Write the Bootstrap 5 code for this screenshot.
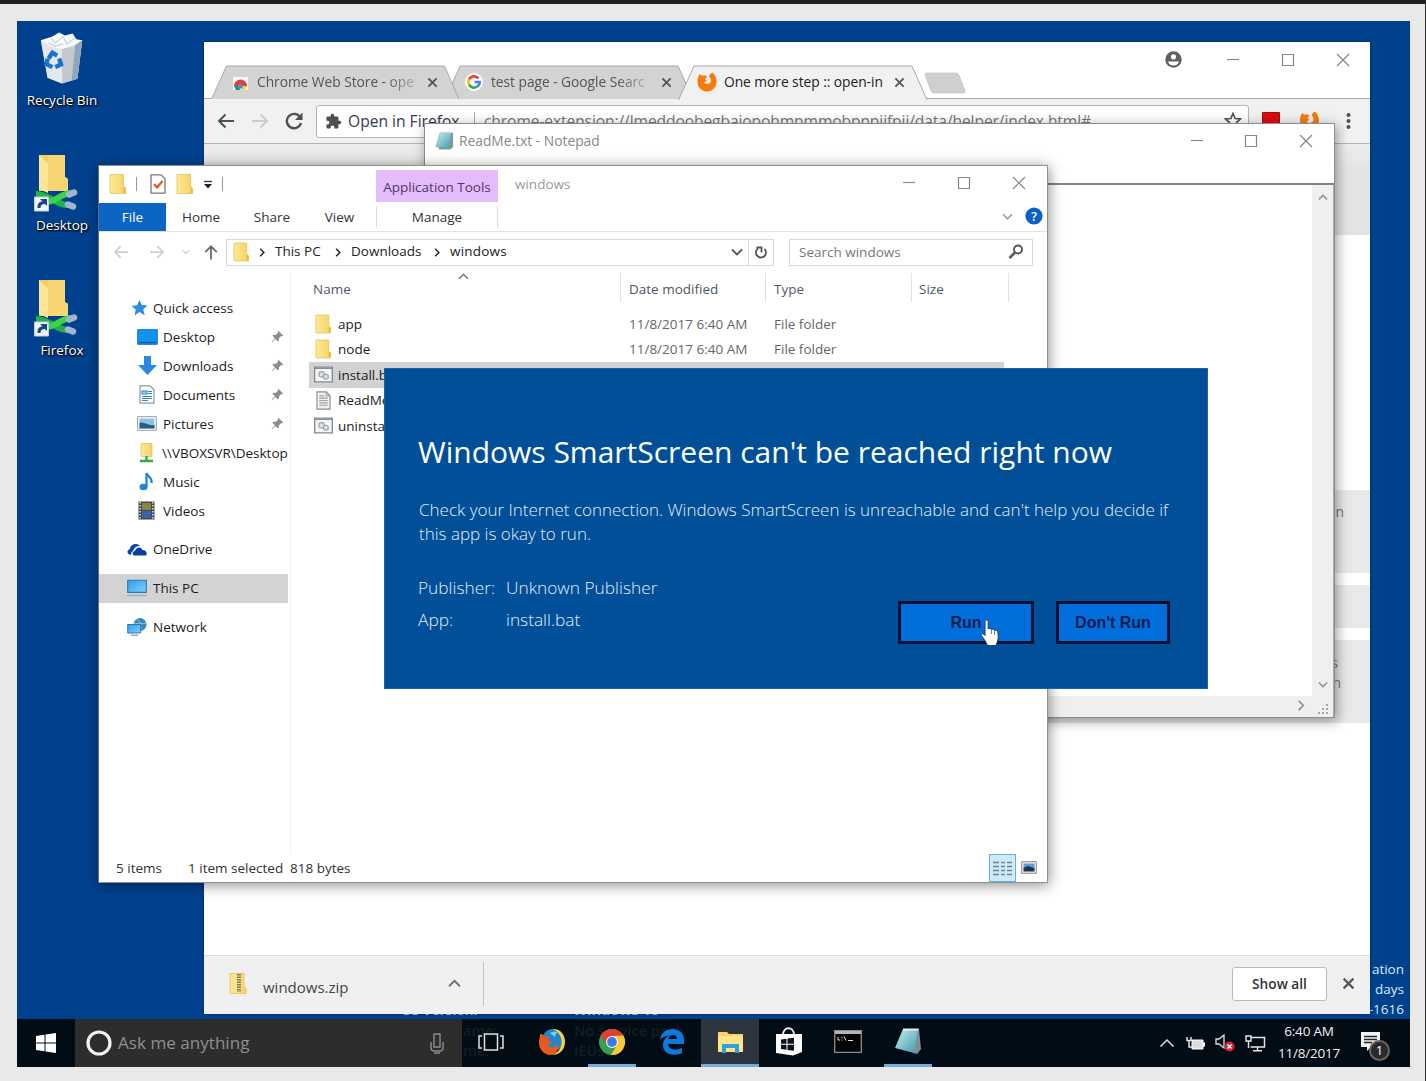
<!DOCTYPE html>
<html lang="en">
<head>
<meta charset="utf-8">
<title>Desktop</title>
<link rel="stylesheet" href="https://cdn.jsdelivr.net/npm/bootstrap@5.3.0/dist/css/bootstrap.min.css">
<script src="https://cdn.jsdelivr.net/npm/bootstrap@5.3.0/dist/js/bootstrap.bundle.min.js"></script>
<style>
body{margin:0;width:1426px;height:1081px;overflow:hidden;background:#e9e9e9;border-top:4px solid #201e20;border-right:1px solid #333;font-family:"Open Sans","Noto Sans",sans-serif;font-size:13.5px;line-height:18px;color:#1c1c1c;white-space:nowrap}
svg{display:block;flex:none}
.screen{margin:17px 0 0 17px;width:1393px;height:1046px;background:#00418e;overflow:hidden}
.desk{height:998px;overflow:hidden}
.win{position:absolute;background:#fff}
.dicon{position:absolute;width:92px;color:#fff;text-shadow:1px 1px 2px #000,0 1px 2px #000;text-align:center}
.dicon svg{margin:0 auto 4px}
.wm{position:absolute;color:#dce8f5}
/* browser */
.browser{left:187px;top:21px;width:1166px;height:972px;box-shadow:0 0 2px #001c40}
.tabstrip{height:57px;border-bottom:1px solid #a9a9a9}
.tabx{position:absolute;top:23px;height:34px;font-size:13.8px;letter-spacing:-.05px;color:#555}
.tabx>.shape{position:absolute;inset:0}
.tabx>.inner{position:relative;height:34px}
.fade-end{-webkit-mask-image:linear-gradient(90deg,#000 82%,rgba(0,0,0,.3))}
.tools{height:45px;background:#f1f1f1;border-bottom:1px solid #b5b5b5}
.omni{width:933px;height:33px;border:1px solid #b4b4b4;border-radius:3px;background:#fff;font-size:15.6px}
.banner-bg{height:91px;background:linear-gradient(#ededed,#e4e4e4 30%)}
.greybox{background:#e9e9e9;color:#777;text-align:right;font-size:14px}
.dlbar{height:59px;background:#f0f0f0;border-top:1px solid #ddd;padding-bottom:3px}
.showall{width:95px;height:34px;border:1px solid #b8b8b8;border-radius:3px;background:#fff;font-weight:600;font-size:13.7px;color:#333}
/* notepad */
.notepad{left:407px;top:102px;width:911px;height:595px;border:1px solid #8c8c8c;box-shadow:2px 3px 12px rgba(0,0,0,.4)}
.np-edge{border-top:2px solid #828282;border-right:1px solid #aaa}
.sb{background:#efefef}
/* explorer */
.explorer{left:81px;top:144px;width:950px;height:718px;border:1px solid #8f8f8f;border-left-color:#5b6f8c;box-shadow:1px 2px 13px rgba(0,0,0,.45)}
.ctx-tab{width:122px;background:#e4bcfb;color:#4f3768}
.file-tab{width:67px;height:28px;background:#0b66c3;color:#fff}
.ribbon{height:30px;border-bottom:1px solid #e2e2e2;color:#333}
.boxed{border:1px solid #d9d9d9;height:27px}
.side{width:189px}
.side .it{height:29px}
.side .sel{background:#d3d3d3}
.pin{margin-left:auto;margin-right:4px}
.colhead{height:30px;color:#505666}
.colhead>div{border-right:1px solid #e2e2e2;height:29px;padding-top:3px}
.frow{height:25.5px;color:#666}
.frow .nm{color:#1c1c1c}
.frow.sel{background:#d2d2d2}
.cn{width:311px}.cd{width:145px}.ct{width:146px}.cs{width:97px}
/* dialog */
.smart{left:367px;top:347px;width:824px;height:321px;background:#004f98;color:#e4eef8;border:1px solid #1c62a6;padding:62px 0 0 33px;font-size:17px;line-height:24px;font-weight:300}
.smart h1{font-size:30px;line-height:41px;font-weight:400;margin:0;color:#fff}
.sbtn{height:43px;border:3px solid #001133;border-radius:0;background:#006fdc;color:#001a4d;font:700 16px/20px "Liberation Sans",sans-serif;padding:0}
.cursor{position:absolute;left:963px;top:598px}
/* taskbar */
.taskbar{height:48px;background:#010c15;color:#f0f0f0}
.search-tb{width:387px;background:#2d2d2d;color:#8f8f8f;font-size:17.1px}
.tb{width:58px;height:48px;border-bottom:3px solid transparent}
.tb.on{position:relative}
.tb.on::after{content:"";position:absolute;left:5px;right:5px;bottom:-3px;height:3px;background:#76a9df}
.tb.act{background:#2f353f;border-color:#76a9df}
.ghost{position:absolute;color:#131d22;font-weight:600;z-index:0;font-size:14.5px}
.taskbar svg{position:relative;z-index:1}
.badge1{position:absolute;left:1352px;top:1019px;width:21px;height:21px;border-radius:50%;background:#2a2a2a;border:2px solid #666;color:#fff;font-size:13px;line-height:17px;text-align:center;z-index:2}
</style>
</head>
<body>
<svg width="0" height="0" class="position-absolute">
<defs>
<linearGradient id="gf" x1="0" x2="1"><stop offset="0" stop-color="#ffe994"/><stop offset="1" stop-color="#f6d264"/></linearGradient>
<linearGradient id="gs" x1="0" y1="0" x2="1" y2="1"><stop offset="0" stop-color="#2f9fe8"/><stop offset="1" stop-color="#7fd0ff"/></linearGradient>
<linearGradient id="gn" x1="0" y1="0" x2="1" y2="1"><stop offset="0" stop-color="#c8eef2"/><stop offset="1" stop-color="#3e9aa6"/></linearGradient>
<symbol id="folder" viewBox="0 0 18 20"><path d="M1 .5h13.500v12l2 1.500v5.500H1z" fill="url(#gf)" stroke="#e3c25c" stroke-width=".8"/><path d="M14.500 13v6h2v-5z" fill="#e8b93c"/></symbol>
<symbol id="min" viewBox="0 0 14 14"><path d="M1 6.500h12" stroke="#8a8a8a" stroke-width="1.200"/></symbol>
<symbol id="max" viewBox="0 0 14 14"><path d="M1.500 1.500h11v11h-11z" fill="none" stroke="#858585" stroke-width="1.200"/></symbol>
<symbol id="cls" viewBox="0 0 14 14"><path d="M1 1l12 12M13 1L1 13" stroke="#858585" stroke-width="1.200"/></symbol>
<symbol id="tx" viewBox="0 0 12 12"><path d="M1.500 1.500l9 9M10.500 1.500l-9 9" stroke="#555" stroke-width="2"/></symbol>
<symbol id="chev" viewBox="0 0 12 8"><path d="M1 1.500l5 5 5-5" fill="none" stroke="currentColor" stroke-width="1.800"/></symbol>
<symbol id="chu" viewBox="0 0 12 8"><path d="M1 6.500l5-5 5 5" fill="none" stroke="currentColor" stroke-width="1.800"/></symbol>
<symbol id="chr" viewBox="0 0 8 12"><path d="M1.500 1l5 5-5 5" fill="none" stroke="currentColor" stroke-width="1.900"/></symbol>
<symbol id="arr" viewBox="0 0 18 16"><path d="M17 8H2M8.500 1.500L2 8l6.500 6.500" fill="none" stroke="currentColor" stroke-width="2"/></symbol>
<symbol id="pinn" viewBox="0 0 14 14"><path d="M8 .8l5.300 5.300-1.400.5-.8-.2-2.700 2.700.1 2.400-1 1-2.700-2.800L1 13.300l-.5-.5 3.700-3.900L1.500 6.100l1-1 2.500.2 2.600-2.600-.2-.8z" fill="#8d8d8d"/></symbol>
<symbol id="bat" viewBox="0 0 20 17"><path d="M.7.700h18.600v15.600H.7z" fill="#f4f4f4" stroke="#858a90" stroke-width="1.400"/><path d="M1 2h18" stroke="#858a90" stroke-width="1.300"/><circle cx="8" cy="8.300" r="2.900" fill="#dde2e6" stroke="#9ba3aa" stroke-width="1.200"/><circle cx="12.500" cy="10.800" r="2.600" fill="#dde2e6" stroke="#9ba3aa" stroke-width="1.200"/></symbol>
<symbol id="doc" viewBox="0 0 16 20"><path d="M1 .8h10l4 4v14.400H1z" fill="#f0f0f0" stroke="#8c8c8c" stroke-width="1.200"/><path d="M11 1v4h4M3.500 7.500h9M3.500 10h9M3.500 12.500h9M3.500 15h9M3.500 5h5" fill="none" stroke="#a0a0a0" stroke-width="1.200"/></symbol>
<symbol id="note" viewBox="0 0 20 20"><path d="M6 1.500h13v15l-3 2.500H4z" fill="#8a9396"/><path d="M5.500 1h12l-2 16.500L1 16z" fill="url(#gn)" stroke="#6aa0a8" stroke-width=".6"/><path d="M5.500 1.300h12.500" stroke="#dadada" stroke-width="1.800" stroke-dasharray="1.500 1"/></symbol>
<symbol id="fox" viewBox="0 0 20 20"><path d="M10 19.500a9.300 9.300 0 0 1-9.500-9.500c0-3 .7-5.500 2-8L5 3.800C7 3 9 3.500 10 4.500L8 7.500l2 1-3 2.300c2 2 6 1.200 6.800-1.300.6-2.500-.5-4-1.800-5.500C13 2 14.500.8 15.500.5 18.500 3 19.500 6.500 19.500 10a9.300 9.300 0 0 1-9.500 9.500z" fill="#f57c0b"/></symbol>
<symbol id="net" viewBox="0 0 46 58"><path d="M6 1h26v22l3 2v12H6z" fill="#f3cd62"/><path d="M6 1l9 8v30l-9-4z" fill="#ffe59a"/><path d="M15 9V1h17v22l3 2v12H15z" fill="#f7d572"/><path d="M3 40c14 0 20 12 34 11" fill="none" stroke="#22b14c" stroke-width="6"/><path d="M12 48c12 0 14-8 26-9" fill="none" stroke="#3fd34a" stroke-width="6"/><path d="M36 40.500l5-2M35 50.500l5 2" stroke="#9fb6cf" stroke-width="6.500" stroke-linecap="round"/><path d="M1.500 43h14v14h-14z" fill="#f2f6fb" stroke="#c6ccd5" stroke-width="1"/><path d="M4.500 54c0-5 2-6.500 5-6.500l-2.500-2.500h7v7l-2-2c-3 0-4.500 1-4.500 4z" fill="#16478e"/></symbol>
<symbol id="monitor" viewBox="0 0 20 18"><path d="M.7 1.200h18.600v12.200H.7z" fill="url(#gs)" stroke="#2e78b5" stroke-width="1.100"/><path d="M0 16.500h20" stroke="#9fb0bd" stroke-width="1.500"/></symbol>
</defs>
</svg>

<div class="screen position-relative">
<div class="desk">
  <div class="dicon" style="left:-1px;top:10px">
    <svg width="50" height="56" viewBox="0 0 52 57"><path d="M4 9h43l-5 40-16 5-15-6z" fill="#d5dadd"/><path d="M4 9l7 39 15 6V17z" fill="#e4e8ea"/><path d="M26 17l21-8-5 40-16 5z" fill="#c2c9ce"/><path d="M40 12l7-3-5 40-6 2z" fill="#8fa6bd"/><path d="M4 9l12-4 7-4 6 3 8-2 4 6 6 1-9 6-12 3-12-3z" fill="#f7f8f9"/><path d="M14 6l5 6 8-7 4 8 8-6M12 12l7 3 8-2" stroke="#b6bfc5" fill="none"/><g fill="none" stroke="#1674d1" stroke-width="4.500"><path d="M12 28l4-6 5 3"/><path d="M23 28l2 6-6 3"/><path d="M16 37l-6-3 1-6"/></g></svg>
    Recycle Bin</div>
  <div class="dicon" style="left:-1px;top:133px"><svg width="46" height="58" style="margin-left:17px"><use href="#net"/></svg>Desktop</div>
  <div class="dicon" style="left:-1px;top:258px"><svg width="46" height="58" style="margin-left:17px"><use href="#net"/></svg>Firefox</div>
  <div class="wm text-end" style="right:6px;top:938px;line-height:20px">ation<br>days<br>-1616</div>
  <div class="wm fw-bold" style="left:384px;top:980px">OS Version:</div>
  <div class="wm fw-bold" style="left:556px;top:980px;font-size:14.500px">Windows 10</div>

  <!-- Browser window -->
  <div class="win browser d-flex flex-column">
    <div class="tabstrip position-relative d-flex justify-content-end align-items-start flex-shrink-0">
      <div class="tabx" style="left:241px;width:248px"><svg class="shape" width="248" height="34"><path d="M.5 34L15 1h218l15 33" fill="#d3d3d3" stroke="#a9a9a9"/></svg>
        <div class="inner d-flex align-items-center"><svg style="margin-left:20px" width="18" height="18" viewBox="0 0 20 20"><circle cx="10" cy="10" r="10" fill="#fff"/><g fill="none" stroke-width="3"><path d="M15 6A6.300 6.300 0 0 0 4.500 7.200" stroke="#ea4335"/><path d="M4.500 7a6.300 6.300 0 0 0 0 6" stroke="#fbbc05"/><path d="M4.500 13A6.300 6.300 0 0 0 14.500 14.300" stroke="#34a853"/><path d="M14.300 14.600C16 13 16.400 11.500 16.300 10H10.500" stroke="#4285f4"/></g></svg>
        <span class="fade-end" style="margin-left:8px">test page - Google Searc</span><svg class="ms-auto" style="margin-right:21px" width="11" height="11"><use href="#tx"/></svg></div></div>
      <div class="tabx" style="left:7px;width:249px"><svg class="shape" width="249" height="34"><path d="M.5 34L15.500 1h218l14.500 33" fill="#d3d3d3" stroke="#a9a9a9"/></svg>
        <div class="inner d-flex align-items-center"><svg style="margin-left:21px" width="17" height="17" viewBox="0 0 17 17"><path d="M1 3h15v13H1z" fill="#f7f7f7"/><path d="M2 12a6.500 6.500 0 0 1 13 0H11a3 3 0 0 0-5 0z" fill="#db4437"/><path d="M2 12h4l2.500 4H4z" fill="#0f9d58"/><path d="M15 12h-4l-2 4h4z" fill="#ffcd40"/><circle cx="8.500" cy="12.500" r="2.300" fill="#4285f4"/></svg>
        <span class="fade-end" style="margin-left:8px">Chrome Web Store - ope</span><svg class="ms-auto" style="margin-right:22px" width="11" height="11"><use href="#tx"/></svg></div></div>
      <div class="tabx" style="left:474px;width:249px;height:35px;color:#222"><svg class="shape" width="249" height="35"><path d="M.5 35L16 1h218l15 34" fill="#f1f1f1" stroke="#a9a9a9"/></svg>
        <div class="inner d-flex align-items-center"><svg style="margin-left:19px" width="20" height="20"><use href="#fox"/></svg>
        <span style="margin-left:7px">One more step :: open-in</span><svg class="ms-auto" style="margin-right:22px" width="11" height="11"><use href="#tx"/></svg></div></div>
      <svg class="position-absolute" style="left:719px;top:30px" width="44" height="22"><path d="M2 3q0-2 2-2h29q2 0 3 2l6 16q0 2-2 2H11q-2 0-3-2z" fill="#cfcfcf" stroke="#c0c0c0" stroke-width=".7"/></svg>
      <div class="d-flex align-items-center" style="padding:9px 20px 0 0;height:26px">
        <svg width="17" height="17" viewBox="0 0 17 17"><circle cx="8.500" cy="8.500" r="8.200" fill="#606060"/><circle cx="8.500" cy="5.800" r="2.600" fill="#fff"/><path d="M3 10.500h11c-1 3-3 4-5.500 4s-4.500-1-5.500-4z" fill="#fff"/></svg>
        <svg style="margin-left:44px" width="14" height="14"><use href="#min"/></svg><svg style="margin-left:41px" width="14" height="14"><use href="#max"/></svg><svg style="margin-left:41px" width="14" height="14"><use href="#cls"/></svg>
      </div>
    </div>
    <div class="tools d-flex align-items-center flex-shrink-0">
      <svg style="margin-left:13px;color:#505050" width="18" height="16"><use href="#arr"/></svg>
      <svg style="margin-left:16px;color:#ccc;transform:scaleX(-1)" width="18" height="16"><use href="#arr"/></svg>
      <svg style="margin-left:16px" width="18" height="18" viewBox="0 0 18 18"><path d="M15 5A7.200 7.200 0 1 0 16 11" fill="none" stroke="#505050" stroke-width="2.400"/><path d="M17.500.5V8H10z" fill="#505050"/></svg>
      <div class="omni d-flex align-items-center" style="margin-left:13px">
        <svg style="margin-left:8px" width="17" height="17" viewBox="0 0 24 24"><path fill="#505050" d="M20.500 11H19V7a2 2 0 0 0-2-2h-4V3.500a2.500 2.500 0 0 0-5 0V5H4a2 2 0 0 0-2 2v3.800h1.500a2.700 2.700 0 0 1 0 5.400H2V20a2 2 0 0 0 2 2h3.800v-1.500a2.700 2.700 0 0 1 5.400 0V22H17a2 2 0 0 0 2-2v-4h1.500a2.500 2.500 0 0 0 0-5z"/></svg>
        <span style="margin-left:6px;width:126px;color:#333c50">Open in Firefox</span><span style="width:1px;height:18px;background:#aaa"></span>
        <span style="margin-left:9px;color:#777;letter-spacing:-.1px">chrome-extension://lmeddoobegbaiopohmpmmobpnpjifpii/data/helper/index.html#</span>
        <svg class="ms-auto" style="margin-right:6px" width="18" height="18" viewBox="0 0 18 18"><path d="M9 1.500l2.200 5 5.300.5-4 3.600 1.200 5.400L9 13.200 4.300 16l1.200-5.400-4-3.600 5.300-.5z" fill="none" stroke="#555" stroke-width="1.700"/></svg>
      </div>
      <svg style="margin-left:13px" width="18" height="18"><path d="M.5.500h17v17H.5z" fill="#e00b0b" stroke="#8c1616"/></svg>
      <svg style="margin-left:19px" width="21" height="20" viewBox="0 0 20 20"><use href="#fox"/></svg>
      <svg style="margin-left:26px" width="5" height="18"><g fill="#505050"><circle cx="2.500" cy="3" r="2"/><circle cx="2.500" cy="9" r="2"/><circle cx="2.500" cy="15" r="2"/></g></svg>
    </div>
    <div class="banner-bg flex-shrink-0"></div>
    <div class="flex-grow-1 d-flex flex-column" style="padding-top:255px">
      <div class="greybox" style="height:83px;padding:13px 26px 0 0">on</div>
      <div class="greybox" style="height:43px;margin-top:12px"></div>
      <div class="greybox" style="height:83px;margin-top:12px;padding:13px 29px 0 0;line-height:20px"><span style="margin-right:3px">s</span><br>n</div>
    </div>
    <div class="dlbar d-flex align-items-center flex-shrink-0">
      <svg style="margin-left:25px" width="18" height="21" viewBox="0 0 18 21"><path d="M1 .5h14v13l2 1.500v5.500H1z" fill="url(#gf)" stroke="#e3c25c" stroke-width=".8"/><path d="M10 1v18" stroke="#7d7d70" stroke-width="4" stroke-dasharray="1.500 1"/></svg>
      <span style="margin-left:16px;width:184px;font-size:15px;padding-top:6px;color:#444">windows.zip</span>
      <svg class="text-secondary" style="margin-left:1px" width="13" height="9"><use href="#chu"/></svg>
      <span style="margin-left:22px;width:1px;height:44px;background:#c4c4c4"></span>
      <div class="showall d-flex align-items-center justify-content-center ms-auto">Show all</div>
      <svg style="margin:0 15px 0 15px" width="13" height="13"><use href="#tx"/></svg>
    </div>
  </div>

  <!-- Notepad window -->
  <div class="win notepad d-flex flex-column">
    <div class="d-flex align-items-center flex-shrink-0" style="height:34px;color:#888">
      <svg style="margin-left:10px" width="19" height="20"><use href="#note"/></svg><span style="margin-left:5px;font-size:13.800px">ReadMe.txt - Notepad</span>
      <svg class="ms-auto" width="14" height="14"><use href="#min"/></svg><svg style="margin-left:40px" width="14" height="14"><use href="#max"/></svg><svg style="margin:0 21px 0 41px" width="14" height="14"><use href="#cls"/></svg>
    </div>
    <div style="height:25px" class="flex-shrink-0"></div>
    <div class="np-edge flex-grow-1 d-flex flex-column">
      <div class="flex-grow-1 d-flex justify-content-end"><div class="sb d-flex flex-column justify-content-between align-items-center text-secondary" style="width:21px;padding:9px 0 8px"><svg class="opacity-75" width="10" height="7"><use href="#chu"/></svg><svg class="opacity-75" width="10" height="7"><use href="#chev"/></svg></div></div>
      <div class="sb d-flex align-items-center justify-content-end text-secondary" style="height:21px"><svg width="8" height="11" class="opacity-75" style="margin:0 11px 3px 0"><use href="#chr"/></svg><svg width="14" height="14" style="margin:4px 3px 0 0"><g fill="#a5a5a5"><path d="M10 2h2v2h-2zM10 6h2v2h-2zM10 10h2v2h-2zM6 6h2v2H6zM6 10h2v2H6zM2 10h2v2H2z"/></g></svg></div>
    </div>
  </div>

  <!-- File explorer window -->
  <div class="win explorer d-flex flex-column">
    <div class="d-flex flex-shrink-0" style="height:36px">
      <div class="d-flex align-items-center" style="width:277px;padding-left:10px">
        <svg width="18" height="20"><use href="#folder"/></svg><span style="margin-left:9px;width:1px;height:14px;background:#999"></span>
        <svg style="margin-left:13px" width="16" height="20" viewBox="0 0 16 20"><path d="M1 .8h10l4 4v14.400H1z" fill="#fff" stroke="#777" stroke-width="1.300"/><path d="M4 10l3 3.500L12.500 7" fill="none" stroke="#e0592a" stroke-width="2.300"/></svg>
        <svg style="margin-left:10px" width="18" height="20"><use href="#folder"/></svg>
        <svg style="margin-left:9px" width="10" height="9"><path d="M1 1.500h8" stroke="#444" stroke-width="1.500"/><path d="M1 4h8L5 8.500z" fill="#222"/></svg><span style="margin-left:9px;width:1px;height:14px;background:#999"></span>
      </div>
      <div class="ctx-tab d-flex align-items-center justify-content-center" style="margin-top:4px;padding-top:1px">Application Tools</div>
      <div class="d-flex align-items-center flex-grow-1" style="color:#999;padding-left:17px;height:36px">windows
        <svg class="ms-auto" width="14" height="14" style="margin-bottom:2px"><use href="#min"/></svg><svg style="margin:0 0 2px 41px" width="14" height="14"><use href="#max"/></svg><svg style="margin:0 21px 2px 41px" width="14" height="14"><use href="#cls"/></svg>
      </div>
    </div>
    <div class="ribbon d-flex align-items-center flex-shrink-0">
      <div class="file-tab d-flex align-items-center justify-content-center">File</div>
      <span class="text-center" style="width:70px">Home</span><span class="text-center" style="width:72px">Share</span><span class="text-center" style="width:63px">View</span>
      <span class="text-center" style="margin-left:5px;width:122px;border:solid #dcdcdc;border-width:0 1px;line-height:22px">Manage</span>
      <svg class="ms-auto text-secondary opacity-75" width="11" height="7"><use href="#chev"/></svg>
      <svg style="margin:0 4px 2px 12px" width="18" height="18"><circle cx="9" cy="9" r="8.600" fill="#0b62c4"/><text x="9" y="13.500" font-size="12.500" font-weight="600" fill="#fff" text-anchor="middle">?</text></svg>
    </div>
    <div class="d-flex align-items-center flex-shrink-0" style="height:40px;color:#222">
      <svg style="margin-left:14px;color:#cfcfcf" width="16" height="14" viewBox="0 0 18 16"><use href="#arr"/></svg>
      <svg style="margin-left:20px;color:#cfcfcf;transform:scaleX(-1)" width="16" height="14"><use href="#arr"/></svg>
      <svg style="margin-left:17px;color:#ccc" width="8" height="6"><use href="#chev"/></svg>
      <svg style="margin-left:13px;color:#6a6a6a;transform:rotate(90deg)" width="16" height="15"><use href="#arr"/></svg>
      <div class="boxed d-flex align-items-center" style="margin-left:7px;width:548px">
        <svg style="margin-left:6px" width="17" height="20"><use href="#folder"/></svg><svg style="margin-left:9px" width="6" height="9"><use href="#chr"/></svg>
        <span style="margin-left:10px;width:60px;padding-bottom:3px">This PC</span><svg width="6" height="9"><use href="#chr"/></svg>
        <span style="margin-left:10px;width:83px;padding-bottom:3px">Downloads</span><svg width="6" height="9"><use href="#chr"/></svg>
        <span style="margin-left:10px;padding-bottom:3px;letter-spacing:.2px">windows</span>
        <svg class="ms-auto" width="12" height="8" style="color:#555"><use href="#chev"/></svg>
        <span style="margin-left:5px;width:1px;height:25px;background:#d9d9d9"></span>
        <svg style="margin:0 5px 0 5px" width="14" height="15" viewBox="0 0 14 15"><path d="M4 3.500A5 5 0 1 0 10.500 4" fill="none" stroke="#555" stroke-width="1.800"/><path d="M2.500 2.500h5v5" fill="none" stroke="#555" stroke-width="1.800"/></svg>
      </div>
      <div class="boxed d-flex align-items-center" style="margin-left:15px;width:244px;padding:0 8px 0 9px;color:#777">Search windows<svg class="ms-auto" width="16" height="16" viewBox="0 0 16 16"><circle cx="10" cy="5.500" r="4" fill="none" stroke="#555" stroke-width="1.900"/><path d="M7 8.500L1.500 14" stroke="#555" stroke-width="2.500"/></svg></div>
    </div>
    <div class="d-flex flex-grow-1">
      <div class="side" style="padding-top:21px">
        <div class="it d-flex align-items-center" style="padding-left:32px"><svg width="17" height="16" viewBox="0 0 17 16"><path d="M8.500 0l2.300 5 5.700.5-4.300 3.800 1.500 6-5.200-3.200L3.500 15.500l1.200-6L.5 6l5.600-.8z" fill="#2c8be4"/></svg><span style="margin-left:5px">Quick access</span></div>
        <div class="it d-flex align-items-center" style="padding-left:38px"><svg width="21" height="16"><path d="M.7.700h19.600v14.600H.7z" fill="#1392f2" stroke="#1471bd"/><path d="M2 13.500h17" stroke="#0a5fae" stroke-width="1.500"/></svg><span style="margin-left:5px">Desktop</span><svg class="pin" width="13" height="13" viewBox="0 0 14 14"><use href="#pinn"/></svg></div>
        <div class="it d-flex align-items-center" style="padding-left:39px"><svg width="19" height="19"><path d="M6 0h7v9h6l-9.500 10L0 9h6z" fill="#2b88df"/></svg><span style="margin-left:6px">Downloads</span><svg class="pin" width="13" height="13"><use href="#pinn"/></svg></div>
        <div class="it d-flex align-items-center" style="padding-left:40px"><svg width="16" height="19" viewBox="0 0 16 19"><path d="M1 .8h10l4 4v13.400H1z" fill="#fff" stroke="#8a98a3" stroke-width="1.200"/><path d="M3 6h5v3H3zM9 6.500h4M9 8.500h4M3 11.500h10M3 13.500h10M3 15.500h6" stroke="#2e86cf" fill="#9cc9ee" stroke-width="1.100"/></svg><span style="margin-left:8px">Documents</span><svg class="pin" width="13" height="13"><use href="#pinn"/></svg></div>
        <div class="it d-flex align-items-center" style="padding-left:38px"><svg width="20" height="15"><path d="M.7.700h18.600v13.600H.7z" fill="#fff" stroke="#999"/><path d="M2.500 2.500h15v10h-15z" fill="#8cc3ec"/><path d="M2.500 7c4-2 8 3 15 2v3.500h-15z" fill="#2b5f78"/></svg><span style="margin-left:6px">Pictures</span><svg class="pin" width="13" height="13"><use href="#pinn"/></svg></div>
        <div class="it d-flex align-items-center" style="padding-left:40px"><svg width="15" height="20"><path d="M2 .5h11v13H2z" fill="url(#gf)" stroke="#e0bb52" stroke-width=".7"/><path d="M7.500 13v4M1 18h13" stroke="#2fae3e" stroke-width="2.400"/></svg><span style="margin-left:8px">\\VBOXSVR\Desktop</span></div>
        <div class="it d-flex align-items-center" style="padding-left:40px"><svg width="15" height="19"><ellipse cx="4.500" cy="15" rx="4" ry="3.300" fill="#1f86dd"/><path d="M7.500 15V1c1 4 6 4 5 10" fill="none" stroke="#1f86dd" stroke-width="2.300"/></svg><span style="margin-left:9px">Music</span></div>
        <div class="it d-flex align-items-center" style="padding-left:39px"><svg width="17" height="19"><path d="M.5.500h16v18H.5z" fill="#44464c"/><path d="M4 2h9v7H4z" fill="#8a8640"/><path d="M4 10h9v7H4z" fill="#3f5fb0"/><path d="M2.200 1v17M14.800 1v17" stroke="#ddd" stroke-width="1.500" stroke-dasharray="1.500 1.500"/></svg><span style="margin-left:8px">Videos</span></div>
        <div class="it d-flex align-items-center" style="margin-top:9.500px;padding-left:28px"><svg width="20" height="13" viewBox="0 0 20 13"><path d="M4 12C0 12-1 7 3 6c0-4 6-7 10-3-4 0-6 2-7 5-2 1-2 3-2 4z" fill="#0d47ad"/><path d="M7 12.500c-2-1-2-4 1-4.500 1-4 6-5 7.500-1 4 0 5 4 3.500 5.500z" fill="#0b3da5"/></svg><span style="margin-left:6px">OneDrive</span></div>
        <div class="it sel d-flex align-items-center" style="margin-top:10px;padding-left:28px"><svg width="20" height="18"><use href="#monitor"/></svg><span style="margin-left:6px">This PC</span></div>
        <div class="it d-flex align-items-center" style="margin-top:9.500px;padding-left:28px"><svg width="20" height="19" viewBox="0 0 20 19"><circle cx="13" cy="7.500" r="6.500" fill="#3c84b8"/><path d="M10 2c4 3 5 8 3 12M7 6c4 1 9 1 12 0" stroke="#8cc8e6" fill="none"/><path d="M.7 7.500h13v8.500H.7z" fill="url(#gs)" stroke="#2e78b5"/><path d="M4 18.300h7" stroke="#8aa" stroke-width="1.300"/></svg><span style="margin-left:6px">Network</span></div>
      </div>
      <div class="flex-grow-1 border-start" style="margin-left:2px;border-color:#f3f3f3!important">
        <div class="colhead d-flex align-items-center position-relative" style="margin-left:19px">
          <svg class="position-absolute text-secondary" style="left:148px;top:1px" width="11" height="7"><use href="#chu"/></svg>
          <div class="cn d-flex align-items-center" style="padding-left:3px">Name</div><div class="cd d-flex align-items-center" style="padding-left:8px">Date modified</div><div class="ct d-flex align-items-center" style="padding-left:8px">Type</div><div class="cs d-flex align-items-center" style="padding-left:7px">Size</div>
        </div>
        <div style="margin:9px 0 0 18px;width:695px">
          <div class="frow d-flex align-items-center"><div class="cn d-flex align-items-center nm" style="padding-left:6px"><svg width="17" height="20"><use href="#folder"/></svg><span style="margin-left:6px">app</span></div><div class="cd" style="padding-left:9px">11/8/2017 6:40 AM</div><div style="padding-left:9px">File folder</div></div>
          <div class="frow d-flex align-items-center"><div class="cn d-flex align-items-center nm" style="padding-left:6px"><svg width="17" height="20"><use href="#folder"/></svg><span style="margin-left:6px">node</span></div><div class="cd" style="padding-left:9px">11/8/2017 6:40 AM</div><div style="padding-left:9px">File folder</div></div>
          <div class="frow sel d-flex align-items-center nm" style="padding-left:5px"><svg width="19" height="17"><use href="#bat"/></svg><span style="margin-left:5px" class="nm">install.bat</span></div>
          <div class="frow d-flex align-items-center" style="padding-left:7px"><svg width="15" height="19"><use href="#doc"/></svg><span style="margin-left:7px" class="nm">ReadMe.txt</span></div>
          <div class="frow d-flex align-items-center" style="padding-left:5px"><svg width="19" height="17"><use href="#bat"/></svg><span style="margin-left:5px" class="nm">uninstall.bat</span></div>
        </div>
      </div>
    </div>
    <div class="d-flex align-items-center flex-shrink-0" style="height:28px;padding-left:17px;color:#333">
      <span style="width:72px">5 items</span><span style="width:102px">1 item selected</span><span>818 bytes</span>
      <div class="ms-auto d-flex align-items-center justify-content-center" style="width:27px;height:28px;background:#cfe9f8;border:1px solid #5fb3dd"><svg width="19" height="17"><path d="M0 2.500h6M0 6.500h6M0 10.500h6M0 14.500h6M8 2.500h4M8 6.500h4M8 10.500h4M8 14.500h4M14 2.500h5M14 6.500h5M14 10.500h5M14 14.500h5" stroke="#6d8594" stroke-width="1.400"/></svg></div>
      <svg style="margin:0 10px 2px 5px" width="16" height="13"><path d="M.7.700h14.600v11.600H.7z" fill="#eee" stroke="#888"/><path d="M2.500 2.500h11v5h-11z" fill="#5b9fd6"/><path d="M2.500 7l4-2 7 2v3.500h-11z" fill="#26354a"/></svg>
    </div>
  </div>

  <!-- SmartScreen prompt -->
  <div class="win smart">
    <h1>Windows SmartScreen can't be reached right now</h1>
    <div style="margin:26px 0 0 1px">Check your Internet connection. Windows SmartScreen is unreachable and can't help you decide if<br>this app is okay to run.</div>
    <div class="d-flex" style="margin-top:26px">
      <div style="width:88px;line-height:32px;font-size:17.300px">Publisher:<br>App:</div><div style="line-height:32px;font-size:17.300px">Unknown Publisher<br>install.bat</div>
      <div class="d-flex ms-auto align-items-start" style="margin-right:37px;gap:22px;padding-top:29px"><button class="btn sbtn" style="width:136px">Run</button><button class="btn sbtn" style="width:114px">Don't Run</button></div>
    </div>
  </div>
  <svg class="cursor" width="21" height="28" viewBox="0 0 21 28"><path d="M5 2.500c0-2 3.200-2 3.200 0V10c1-1 3-.8 3.200.6 1-.8 3-.5 3.200 1 1-.8 3-.3 3.200 1.500 1 7 0 9-2 13.500H7.500C6 22 3 19 1 16c0-2 2.500-1.500 4 .5z" fill="#fff" stroke="#1a3c66" stroke-width="1"/><path d="M11.400 11v4M14.600 12v4" stroke="#555" stroke-width=".8"/></svg>
</div>

<!-- Taskbar -->
<div class="taskbar d-flex align-items-center">
  <div class="d-flex align-items-center justify-content-center" style="width:58px"><svg width="20" height="20" viewBox="0 0 20 20"><path d="M0 3l8.500-1.200v7.700H0zM9.500 1.600L20 0v9.500H9.500zM0 10.500h8.500v7.700L0 17zM9.500 10.500H20V20L9.500 18.400z" fill="#fff"/></svg></div>
  <div class="search-tb d-flex align-items-center h-100"><svg style="margin-left:11px" width="26" height="26"><circle cx="13" cy="13" r="11" fill="none" stroke="#f2f2f2" stroke-width="3.200"/></svg><span style="margin-left:6px">Ask me anything</span>
    <svg class="ms-auto" style="margin-right:18px" width="14" height="21"><path d="M4 1h6v13H4z" fill="none" stroke="#8c8c8c" stroke-width="1.400"/><path d="M1 9v6q0 3 3 3h6q3 0 3-3V9M4 20h6" fill="none" stroke="#8c8c8c" stroke-width="1.400"/></svg></div>
  <span class="ghost" style="left:446px;top:1001px">ame:</span><span class="ghost" style="left:446px;top:1021px">me:</span><span class="ghost" style="left:557px;top:1001px">No service pack</span><span class="ghost" style="left:557px;top:1021px">IEUser</span>
  <div class="tb d-flex align-items-center justify-content-center"><svg width="26" height="18"><path d="M6.500 1h13v16h-13zM4 3H1v12h3M22 3h3v12h-3" fill="none" stroke="#e0e0e0" stroke-width="1.500"/></svg></div>
  <div class="tb d-flex align-items-center justify-content-center" style="margin-left:3px"><svg width="28" height="28" viewBox="0 0 28 28"><circle cx="15" cy="12" r="11" fill="#2286cf"/><path d="M15 1c8 0 12 6 12 13s-5 13-13 13c8-3 11-10 9-17-1-4-4-7-8-9z" fill="#ffce3b"/><path d="M2 6c2 0 4 1 5 3 2-1 4-1 5 0l-3 3c1 1 4 1 5 2-1 2-3 3-5 3 3 4 9 3 11-1 1 5-2 11-8 11A12 12 0 0 1 1 14C1 11 2 9 2 6z" fill="#ea5a1a"/><path d="M12 5q4-3 8 0-3 0-3 4z" fill="#79d1ef"/></svg></div>
  <div class="tb on d-flex align-items-center justify-content-center" style="margin-left:2px"><svg width="28" height="28" viewBox="0 0 28 28"><circle cx="14" cy="14" r="13" fill="#34a350"/><path d="M2.740 7.500A13 13 0 0 1 25.300 7.500L14 8 8.800 17z" fill="#e0402f"/><path d="M25.300 7.500A13 13 0 0 1 13 27l6-10-5-9z" fill="#fcc934"/><circle cx="14" cy="14" r="6" fill="#fff"/><circle cx="14" cy="14" r="4.900" fill="#3f78e8"/></svg></div>
  <div class="tb d-flex align-items-center justify-content-center" style="margin-left:2px"><svg width="26" height="27" viewBox="0 0 26 27"><path d="M1 12C2 4 8 1 13.500 1 21 1 25 6 25 12v4H9c.5 6 9 7 14 3.500V25c-7 3.500-19 2-19-8 0-5 3-8 6-9.500-4 .5-7 2-9 4.500zM9.500 11H18c0-6-8-5.500-8.500 0z" fill="#0c7bdc"/></svg></div>
  <div class="tb act d-flex align-items-center justify-content-center"><svg width="27" height="24" viewBox="0 0 27 24"><path d="M1 2h9l2 2h14v18H1z" fill="#f5d568"/><path d="M1 6h25v16H1z" fill="#ffe48a"/><path d="M5 23v-9h17v9h-4v-5H9v5z" fill="#2fa3dc"/></svg></div>
  <div class="tb d-flex align-items-center justify-content-center" style="margin-left:1px"><svg width="26" height="29" viewBox="0 0 26 29"><path d="M7 8c0-9 11-9 11 0" fill="none" stroke="#eee" stroke-width="1.800"/><path d="M0 7l26 0v18l-9 3.500L0 26z" fill="#fff"/><path d="M5 12.500l5.500-.7v5H5zM11.500 11.600l6.500-.8v6h-6.500zM5 17.800h5.500v5L5 22zM11.500 17.800H18v6l-6.500-.9z" fill="#0a1420"/></svg></div>
  <div class="tb d-flex align-items-center justify-content-center" style="margin-left:1px"><svg width="28" height="23"><path d="M.7.700h26.600v21.600H.7z" fill="#050505" stroke="#8d8d8d" stroke-width="1.300"/><path d="M1 2.500h26" stroke="#b5b5b5" stroke-width="3"/><path d="M4 7v3h2M8 7v1M8 9.500v1M10 6.500l2 4M14 10.500h5" stroke="#ddd" fill="none"/></svg></div>
  <div class="tb on d-flex align-items-center justify-content-center" style="margin-left:2px"><svg width="28" height="27" viewBox="0 0 28 27"><path d="M9 1h16l2 20-4 5-4-1z" fill="#7e8f94"/><path d="M9 1h15l-4 24L1 20z" fill="url(#gn)"/><path d="M9 1.500h15.500" stroke="#e6eef0" stroke-width="2"/></svg></div>
  <svg class="ms-auto" width="16" height="10" style="margin-right:11px"><path d="M1.500 8.500L8 2l6.500 6.500" fill="none" stroke="#e0e0e0" stroke-width="1.500"/></svg>
  <svg width="20" height="15" viewBox="0 0 20 15"><path d="M6 4h11v9H6z" fill="#dcdcdc" stroke="#fff"/><path d="M18 6.500v4" stroke="#fff" stroke-width="2"/><path d="M1 1v3.500h4V1M3 5v6h3" fill="none" stroke="#e8e8e8" stroke-width="1.500"/></svg>
  <svg style="margin-left:9px" width="20" height="18"><path d="M1 5h3l5-4v13l-5-4H1z" fill="none" stroke="#e0e0e0" stroke-width="1.300"/><circle cx="14.500" cy="12.500" r="5" fill="#dc2130"/><path d="M12.500 10.500l4 4M16.500 10.500l-4 4" stroke="#fff" stroke-width="1.400"/></svg>
  <svg style="margin-left:10px" width="21" height="17"><path d="M5.500 2.500h14v9.500H5.500M12.500 12v3.500M8 15.800h9" fill="none" stroke="#e4e4e4" stroke-width="1.500"/><path d="M1 1h5v5H1zM3.500 6v7" fill="none" stroke="#e4e4e4" stroke-width="1.400"/></svg>
  <div class="text-center" style="margin-left:9px;width:68px;line-height:22px;letter-spacing:-.2px;padding-bottom:2px">6:40 AM<br>11/8/2017</div>
  <svg style="margin:0 29px 3px 18px" width="20" height="20" viewBox="0 0 20 20"><path d="M0 0h19v15h-9l-4 4v-4H0z" fill="#f2f2f2"/><path d="M3 4.500h13M3 7.500h13M3 10.500h8" stroke="#222" stroke-width="1.300"/></svg>
  <span class="badge1">1</span>
</div>
</div>
</body>
</html>
